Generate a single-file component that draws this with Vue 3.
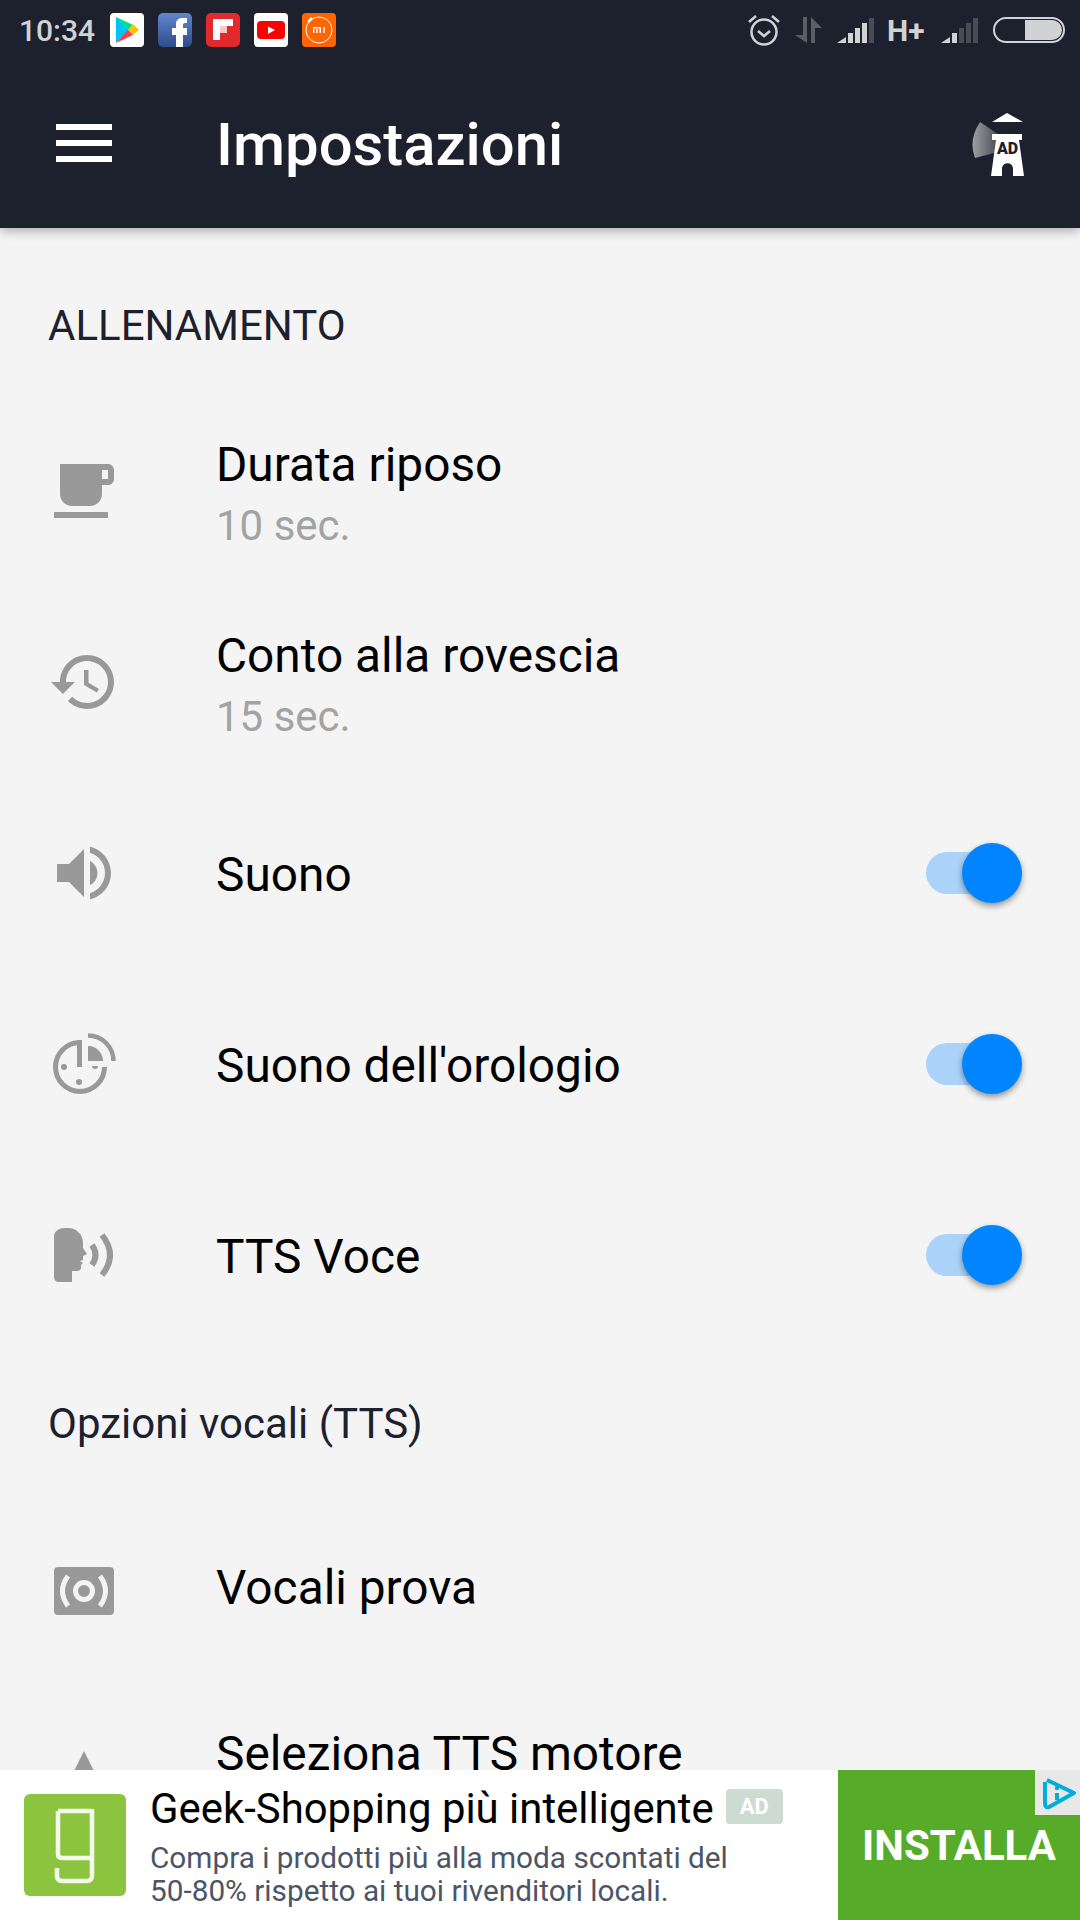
<template>
  <div class="page">
    <header class="top">
      <div class="status">
        <span class="time">10:34</span>
        <div class="notifs">
          <svg class="notif" viewBox="0 0 34 34">
            <rect width="34" height="34" rx="4" fill="#fff"/>
            <polygon points="6,4 6,17 19,17" fill="#00d977"/>
            <polygon points="6,4 19,17 23,12" fill="#00e27a"/>
            <polygon points="6,4 6,30 19,17" fill="#00c3f5"/>
            <polygon points="23,11 29,17 23,22 18,17" fill="#ffc400"/>
            <polygon points="6,30 18,17 23,22" fill="#f73c4c"/>
          </svg>
          <svg class="notif" viewBox="0 0 34 34">
            <defs>
              <linearGradient id="fb" x1="0" y1="0" x2="0" y2="1">
                <stop offset="0" stop-color="#5f86cf"/>
                <stop offset="1" stop-color="#2f4c8c"/>
              </linearGradient>
            </defs>
            <rect width="34" height="34" rx="5" fill="url(#fb)"/>
            <path d="M18 34V22H14V15H18V11C18 7 21 5 24 5H29V10H27C25.500 10 25 11 25 12V15H29V22H25V34Z" fill="#fff"/>
          </svg>
          <svg class="notif" viewBox="0 0 34 34">
            <rect width="34" height="34" rx="5" fill="#e2292b"/>
            <rect x="7" y="6" width="7" height="21" fill="#fff"/>
            <rect x="14" y="6" width="13" height="7" fill="#fff"/>
            <rect x="14" y="13" width="7" height="7" fill="#fbc6c6"/>
          </svg>
          <svg class="notif" viewBox="0 0 34 34">
            <rect width="34" height="34" rx="4" fill="#fff"/>
            <rect x="3" y="8" width="28" height="18" rx="4" fill="#f00"/>
            <polygon points="14,13.500 21,17 14,21" fill="#fff"/>
          </svg>
          <svg class="notif" viewBox="0 0 34 34">
            <rect width="34" height="34" rx="4" fill="#ff6500"/>
            <circle cx="17" cy="17" r="13" fill="none" stroke="#fff" stroke-width="1"/>
            <path d="M6 9L10 5" stroke="#fff" stroke-width="2.500"/>
            <path d="M11 14.750h8M11.750 14v6M15 16v4M18.250 14v6M22 14v6" fill="none" stroke="#fff" stroke-width="1.500"/>
          </svg>
        </div>
        <div class="sys">
          <svg class="alarm" viewBox="0 0 32 32">
            <circle cx="16" cy="18" r="12.500" fill="none" stroke="#d0d2d5" stroke-width="2.500"/>
            <path d="M10 17l6 5 6-5" fill="none" stroke="#d0d2d5" stroke-width="2.500"/>
            <path d="M1 8l7-6M31 8l-7-6" stroke="#d0d2d5" stroke-width="2.500"/>
          </svg>
          <svg class="arrows" viewBox="0 0 27 26">
            <path d="M0 18h8V0h4v26z" fill="#5b5e67"/>
            <path d="M16 26V0l11 11h-7v15z" fill="#5b5e67"/>
          </svg>
          <svg class="signal" viewBox="0 0 37 25">
            <polygon points="0,25 9,19 9,25" fill="#d0d2d5"/>
            <rect x="11" y="15" width="5" height="10" fill="#d0d2d5"/>
            <rect x="18" y="10" width="5" height="15" fill="#d0d2d5"/>
            <rect x="25" y="5" width="5" height="20" fill="#d0d2d5"/>
            <rect x="32" y="0" width="5" height="25" fill="#494c55"/>
          </svg>
          <span class="net">H+</span>
          <svg class="signal" viewBox="0 0 37 25">
            <polygon points="0,25 9,19 9,25" fill="#d0d2d5"/>
            <rect x="11" y="15" width="5" height="10" fill="#d0d2d5"/>
            <rect x="18" y="10" width="5" height="15" fill="#494c55"/>
            <rect x="25" y="5" width="5" height="20" fill="#494c55"/>
            <rect x="32" y="0" width="5" height="25" fill="#494c55"/>
          </svg>
          <div class="battery"><div class="charge"></div></div>
        </div>
      </div>
      <div class="toolbar">
        <svg class="burger" viewBox="0 0 56 38">
          <rect width="56" height="6" fill="#fff"/>
          <rect y="16" width="56" height="6" fill="#fff"/>
          <rect y="32" width="56" height="6" fill="#fff"/>
        </svg>
        <h1 class="title">Impostazioni</h1>
        <svg class="tower" viewBox="0 0 60 70">
          <defs>
            <linearGradient id="beam" x1="0" y1="0" x2="1" y2="0">
              <stop offset="0" stop-color="#9d9fa3"/>
              <stop offset="1" stop-color="#4a4d55"/>
            </linearGradient>
          </defs>
          <path d="M10 12Q-2 30 5 48L28 42V24z" fill="url(#beam)"/>
          <polygon points="37,3 22,12 53,12" fill="#fff"/>
          <path d="M22 24H52V30H49L54 66H43V58A5.600 6 0 0 0 32 58V66H21L26 30H22Z" fill="#fff"/>
          <text x="37.500" y="44" class="tower-ad">AD</text>
        </svg>
      </div>
    </header>

    <main class="content">
      <h2 class="section first">ALLENAMENTO</h2>

      <div class="row">
        <svg class="icon" viewBox="0 0 24 24">
          <path d="M20 3H4v10c0 2.210 1.790 4 4 4h6c2.210 0 4-1.790 4-4v-3h2c1.110 0 2-.9 2-2V5c0-1.110-.89-2-2-2zm0 5h-2V5h2v3zM2 21h18v-2H2v2z"/>
        </svg>
        <div class="text">
          <div class="name">Durata riposo</div>
          <div class="sub">10 sec.</div>
        </div>
      </div>

      <div class="row">
        <svg class="icon" viewBox="0 0 24 24">
          <path d="M13 3c-4.970 0-9 4.030-9 9H1l3.890 3.890.07.14L9 12H6c0-3.870 3.130-7 7-7s7 3.130 7 7-3.130 7-7 7c-1.930 0-3.680-.79-4.940-2.060l-1.420 1.420C8.270 19.990 10.510 21 13 21c4.970 0 9-4.030 9-9s-4.030-9-9-9zm-1 5v5l4.280 2.540.72-1.210-3.500-2.080V8H12z"/>
        </svg>
        <div class="text">
          <div class="name">Conto alla rovescia</div>
          <div class="sub">15 sec.</div>
        </div>
      </div>

      <div class="row">
        <svg class="icon" viewBox="0 0 24 24">
          <path d="M3 9v6h4l5 5V4L7 9H3zm13.500 3c0-1.770-1.020-3.290-2.500-4.030v8.050c1.480-.73 2.500-2.250 2.500-4.020zM14 3.230v2.060c2.890.86 5 3.540 5 6.710s-2.110 5.850-5 6.710v2.060c4.010-.91 7-4.490 7-8.770s-2.990-7.860-7-8.770z"/>
        </svg>
        <div class="text"><div class="name">Suono</div></div>
        <div class="switch"><div class="thumb"></div></div>
      </div>

      <div class="row">
        <svg class="icon" viewBox="0 0 72 72">
          <path d="M32 14.500A24.500 24.500 0 1 0 56.500 39" fill="none" stroke="#999" stroke-width="5"/>
          <rect x="29" y="12" width="5" height="27" fill="#999"/>
          <path d="M40 18A15 15 0 0 1 55 33H40Z"/>
          <path d="M40 7.500A25.500 25.500 0 0 1 65.500 33" fill="none" stroke="#999" stroke-width="4.500"/>
          <circle cx="16" cy="39" r="3"/>
          <circle cx="31" cy="54" r="3"/>
          <path d="M44 38h6a3 3 0 0 1-6 0z"/>
        </svg>
        <div class="text"><div class="name">Suono dell'orologio</div></div>
        <div class="switch"><div class="thumb"></div></div>
      </div>

      <div class="row">
        <svg class="icon" viewBox="0 0 72 72">
          <path d="M6 18C6 12 11 9 17 9H20C28 9 35 15 35 24V29L39 35L35 37V41L32 42L35 44L33 46V49C33 51 31 52 29 52H24V63H11C8 63 6 61 6 58Z"/>
          <path d="M44 26Q51 36 44 46" fill="none" stroke="#999" stroke-width="6"/>
          <path d="M54 16Q70 36 54 56" fill="none" stroke="#999" stroke-width="6"/>
        </svg>
        <div class="text"><div class="name">TTS Voce</div></div>
        <div class="switch"><div class="thumb"></div></div>
      </div>

      <h2 class="section">Opzioni vocali (TTS)</h2>

      <div class="row">
        <svg class="icon" viewBox="0 0 72 72">
          <rect x="6" y="14" width="60" height="48" rx="4"/>
          <circle cx="36" cy="38" r="8.500" fill="none" stroke="#f4f4f4" stroke-width="5"/>
          <path d="M20 23Q9 38 20 53M52 23Q63 38 52 53" fill="none" stroke="#f4f4f4" stroke-width="5"/>
        </svg>
        <div class="text tight"><div class="name">Vocali prova</div></div>
      </div>

      <div class="row">
        <svg class="icon" viewBox="0 0 72 72">
          <polygon points="36,7 18,43 54,43"/>
        </svg>
        <div class="text">
          <div class="name">Seleziona TTS motore</div>
          <div class="sub">&nbsp;</div>
        </div>
      </div>
    </main>

    <footer class="ad">
      <svg class="ad-logo" viewBox="0 0 102 102">
        <rect width="102" height="102" rx="6" fill="#8bc540"/>
        <path d="M34 17H68M68 15V82C68 85 66 87 63 87H38C35 87 33 85 33 82V74M34 17V60C34 62 35 64 38 64H68" fill="none" stroke="#f4fbea" stroke-width="4.500"/>
      </svg>
      <div class="ad-text">
        <div class="ad-head">
          <span class="ad-title">Geek-Shopping più intelligente</span>
          <span class="ad-chip">AD</span>
        </div>
        <p class="ad-desc">Compra i prodotti più alla moda scontati del<br>50-80% rispetto ai tuoi rivenditori locali.</p>
      </div>
      <div class="ad-cta">INSTALLA</div>
      <div class="ad-choices">
        <svg viewBox="0 0 45 45">
          <path d="M12 10L39 23L14 37C11 38 10 36 10 33V12" fill="none" stroke="#00aed9" stroke-width="4" stroke-linejoin="round"/>
          <circle cx="22" cy="18" r="2.200" fill="#00aed9"/>
          <path d="M22 23V30" stroke="#00aed9" stroke-width="4"/>
        </svg>
      </div>
    </footer>
  </div>
</template>

<script setup>
</script>

<style>
html, body {
  margin: 0;
  padding: 0;
}
</style>

<style scoped>
.page {
  width: 1080px;
  height: 1920px;
  display: flex;
  flex-direction: column;
  overflow: hidden;
  background: #f4f4f4;
  font-family: Roboto, sans-serif;
}

.top {
  flex: none;
  height: 228px;
  background: #1c212d;
  box-shadow: 0 3px 10px rgba(0, 0, 0, .3);
  position: relative;
  z-index: 1;
}

.status {
  height: 60px;
  display: flex;
  align-items: center;
  padding: 0 15px 0 19px;
}
.time {
  font-size: 30px;
  font-weight: 500;
  color: #d0d2d5;
  width: 91px;
}
.notifs {
  display: flex;
  gap: 14px;
}
.notif {
  width: 34px;
  height: 34px;
}
.sys {
  margin-left: auto;
  display: flex;
  align-items: center;
}
.alarm {
  width: 32px;
  height: 32px;
  margin-right: 15px;
}
.arrows {
  width: 27px;
  height: 26px;
  margin-right: 15px;
}
.signal {
  width: 37px;
  height: 25px;
}
.net {
  font-size: 30px;
  font-weight: 700;
  color: #d0d2d5;
  width: 36px;
  margin: 0 18px 0 13px;
}
.battery {
  width: 72px;
  height: 26px;
  margin-left: 15px;
  box-sizing: border-box;
  border: 2px solid #d0d2d5;
  border-radius: 13px;
  padding: 1px;
  display: flex;
  justify-content: flex-end;
}
.charge {
  width: 37px;
  background: #d0d2d5;
  border-radius: 0 10px 10px 0;
}

.toolbar {
  height: 168px;
  display: flex;
  align-items: center;
  padding: 0 50px 0 56px;
}
.burger {
  width: 56px;
  height: 38px;
  margin-top: -2px;
}
.title {
  margin: 2px 0 0 104px;
  font-size: 59.800px;
  font-weight: 500;
  color: #fff;
}
.tower {
  margin-left: auto;
  width: 60px;
  height: 70px;
  margin-top: 2px;
}
.tower-ad {
  font-size: 16px;
  font-weight: 900;
  text-anchor: middle;
  fill: #1c212d;
}

.content {
  flex: 1;
  min-height: 0;
  overflow: hidden;
}
.section {
  margin: 0;
  height: 143px;
  display: flex;
  align-items: center;
  padding: 4px 0 0 48px;
  box-sizing: border-box;
  font-size: 42px;
  font-weight: 400;
  color: #1c212d;
}
.section.first {
  margin-top: 24px;
}

.row {
  height: 191px;
  display: flex;
  align-items: center;
  padding: 0 58px 0 48px;
  box-sizing: border-box;
}
.icon {
  flex: none;
  width: 72px;
  height: 72px;
  fill: #999;
}
.text {
  margin-left: 96px;
  flex: 1;
  padding-top: 5px;
}
.text.tight {
  margin-top: -7px;
}
.name {
  font-size: 47.800px;
  line-height: 60px;
  color: #000;
}
.sub {
  font-size: 42px;
  line-height: 60px;
  margin: 1px 0 -5px;
  color: #a3a3a3;
}

.switch {
  width: 96px;
  height: 42px;
  background: #abd3fa;
  border-radius: 21px;
  position: relative;
}
.thumb {
  position: absolute;
  right: 0;
  top: -9px;
  width: 60px;
  height: 60px;
  border-radius: 50%;
  background: #0084ff;
  box-shadow: 0 3px 6px rgba(0, 0, 0, .4);
}

.ad {
  flex: none;
  height: 150px;
  background: #fff;
  display: flex;
  position: relative;
  z-index: 1;
}
.ad-logo {
  flex: none;
  width: 102px;
  height: 102px;
  margin: 24px 0 0 24px;
}
.ad-text {
  flex: 1;
  min-width: 0;
  padding: 15px 0 0 24px;
}
.ad-head {
  display: flex;
  align-items: center;
}
.ad-title {
  font-size: 41.900px;
  line-height: 48px;
  color: #000;
}
.ad-chip {
  margin: -6px 0 0 12px;
  width: 57px;
  height: 35px;
  line-height: 35px;
  text-align: center;
  background: #cddbd3;
  color: #fff;
  font-size: 22px;
  font-weight: 700;
  border-radius: 4px;
}
.ad-desc {
  margin: 8px 0 0;
  font-size: 29.750px;
  line-height: 33px;
  color: #4c5567;
}
.ad-cta {
  flex: none;
  width: 242px;
  background: #56ac28;
  color: #fff;
  font-size: 42px;
  font-weight: 700;
  display: flex;
  align-items: center;
  justify-content: center;
}
.ad-choices {
  position: absolute;
  right: 0;
  top: 0;
  width: 45px;
  height: 45px;
  background: #e8e8e8;
}
.ad-choices svg {
  display: block;
  width: 45px;
  height: 45px;
}
</style>
